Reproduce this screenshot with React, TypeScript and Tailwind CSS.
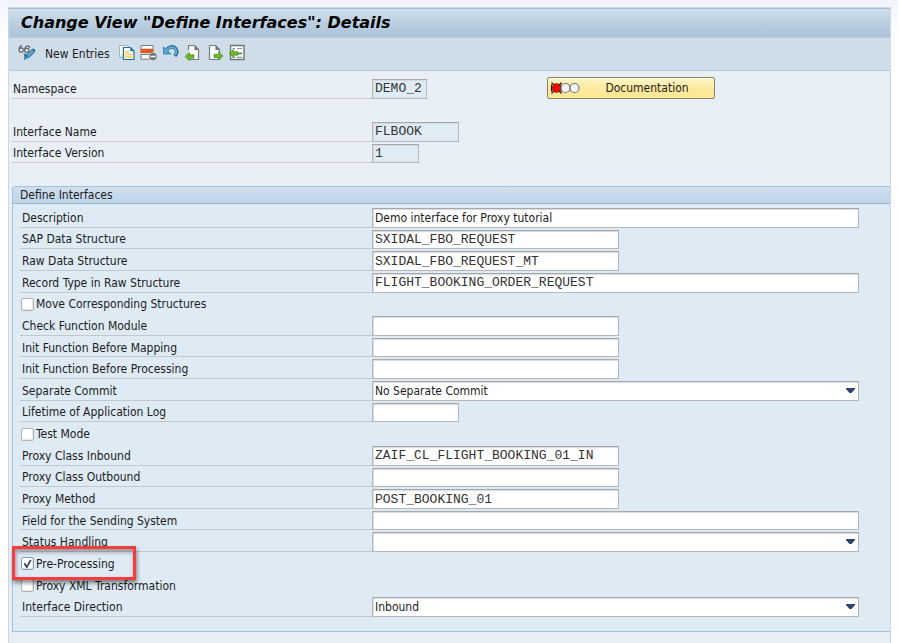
import type { ReactNode } from "react";

type Row = {
  id: string;
  label: string;
  kind: "text" | "mono" | "select" | "check";
  size?: "sm" | "md" | "full";
  value?: string;
  checked?: boolean;
  marked?: boolean;
};

const rows: Row[] = [
  { id: "description", label: "Description", kind: "text", size: "full", value: "Demo interface for Proxy tutorial" },
  { id: "sap-structure", label: "SAP Data Structure", kind: "mono", size: "md", value: "SXIDAL_FBO_REQUEST" },
  { id: "raw-structure", label: "Raw Data Structure", kind: "mono", size: "md", value: "SXIDAL_FBO_REQUEST_MT" },
  { id: "record-type", label: "Record Type in Raw Structure", kind: "mono", size: "full", value: "FLIGHT_BOOKING_ORDER_REQUEST" },
  { id: "move-corresponding", label: "Move Corresponding Structures", kind: "check" },
  { id: "check-function", label: "Check Function Module", kind: "mono", size: "md" },
  { id: "init-mapping", label: "Init Function Before Mapping", kind: "mono", size: "md" },
  { id: "init-processing", label: "Init Function Before Processing", kind: "mono", size: "md" },
  { id: "separate-commit", label: "Separate Commit", kind: "select", value: "No Separate Commit" },
  { id: "log-lifetime", label: "Lifetime of Application Log", kind: "mono", size: "sm" },
  { id: "test-mode", label: "Test Mode", kind: "check" },
  { id: "proxy-inbound", label: "Proxy Class Inbound", kind: "mono", size: "md", value: "ZAIF_CL_FLIGHT_BOOKING_01_IN" },
  { id: "proxy-outbound", label: "Proxy Class Outbound", kind: "mono", size: "md" },
  { id: "proxy-method", label: "Proxy Method", kind: "mono", size: "md", value: "POST_BOOKING_01" },
  { id: "sending-system", label: "Field for the Sending System", kind: "mono", size: "full" },
  { id: "status-handling", label: "Status Handling", kind: "select", value: "" },
  { id: "pre-processing", label: "Pre-Processing", kind: "check", checked: true, marked: true },
  { id: "xml-transformation", label: "Proxy XML Transformation", kind: "check" },
  { id: "direction", label: "Interface Direction", kind: "select", value: "Inbound" },
];

const widths = { sm: "w-[87px]", md: "w-[247px]", full: "w-full" };

const fieldBox =
  "block h-full min-w-0 rounded-none border border-[#b4b8bc] border-t-[#a4a8ac] px-0.5 text-[#1c1c1c] shadow-[inset_1px_1px_1px_#d8dadc] outline-none";
const monoText = "font-['Liberation_Mono','Courier_New',monospace] text-[13px] text-[#333]";

function LabelledRow({ id, label, children }: { id: string; label: string; children: ReactNode }) {
  return (
    <div className="flex min-h-0">
      <label htmlFor={id} className="flex w-[352px] shrink-0 items-center border-b border-[#c3c8cc] pt-[3px] pl-0.5">
        {label}
      </label>
      <div className="min-w-0 flex-1 pt-0.5">{children}</div>
    </div>
  );
}

function SelectBox({ id, value }: { id: string; value: string }) {
  return (
    <div className="relative h-full">
      <select id={id} defaultValue={value} className={`${fieldBox} w-full appearance-none bg-white`}>
        <option value={value}>{value}</option>
      </select>
      <svg className="pointer-events-none absolute top-1/2 right-1 -mt-[3px]" width="9" height="5" viewBox="0 0 9 5">
        <path d="M0 0h9v1L5.5 5h-2L0 1z" fill="#2b4272" />
      </svg>
    </div>
  );
}

function CheckRow({ row }: { row: Row }) {
  return (
    <div className="relative flex items-center pt-0.5 pl-px">
      <div className="relative h-[13px] w-[13px]">
        <input
          id={row.id}
          type="checkbox"
          defaultChecked={row.checked}
          className="peer block h-[13px] w-[13px] appearance-none rounded-[2px] border border-[#b3b3b3] bg-white shadow-[inset_-1px_-1px_1px_#e6e6e6] checked:border-[#7f9fc4]"
        />
        <svg className="pointer-events-none absolute inset-0 hidden peer-checked:block" width="13" height="13" viewBox="0 0 13 13">
          <path d="M3.3 6.3l2.4 3.9L9.8 3" fill="none" stroke="#32405c" strokeWidth="1.7" />
        </svg>
      </div>
      <label htmlFor={row.id} className="pl-0.5">{row.label}</label>
      {row.marked && (
        <div className="pointer-events-none absolute -top-1.5 -left-2 z-10 h-[34px] w-[124px] border-3 border-[#f73c3c] shadow-[1px_3px_4px_rgba(0,0,0,0.45),inset_1px_3px_4px_rgba(0,0,0,0.35)]" />
      )}
    </div>
  );
}

function FormRow({ row }: { row: Row }) {
  if (row.kind === "check") return <CheckRow row={row} />;
  return (
    <LabelledRow id={row.id} label={row.label}>
      {row.kind === "select" ? (
        <SelectBox id={row.id} value={row.value ?? ""} />
      ) : (
        <input
          id={row.id}
          type="text"
          defaultValue={row.value}
          className={`${fieldBox} bg-white ${widths[row.size ?? "md"]} ${row.kind === "mono" ? monoText : ""}`}
        />
      )}
    </LabelledRow>
  );
}

function KeyField({ id, label, value, width }: { id: string; label: string; value: string; width: string }) {
  return (
    <div className="flex min-h-0">
      <label htmlFor={id} className="flex w-[360px] shrink-0 items-center border-b border-[#c9cdd0] pt-[3px] pl-px">
        {label}
      </label>
      <div className="pt-0.5">
        <input id={id} type="text" readOnly defaultValue={value} className={`${fieldBox} ${monoText} ${width} bg-[#dfebf5]`} />
      </div>
    </div>
  );
}

const GreenLeft = ({ x, y }: { x: number; y: number }) => (
  <path transform={`translate(${x} ${y})`} d="M0 4L4.5 0v2.3H9v3.4H4.5V8z" fill="#6fb52c" stroke="#4c8f22" strokeWidth=".7" />
);

function ToolButton({ name, children }: { name: string; children: ReactNode }) {
  return (
    <button type="button" aria-label={name} className="block h-[18px] w-[18px]">
      <svg width="18" height="18" viewBox="0 0 18 18">{children}</svg>
    </button>
  );
}

function Toolbar() {
  return (
    <div className="flex h-[33px] items-center border-b border-[#b9c9da] bg-[#cfdde8] pb-0.5 pl-[9px]">
      <ToolButton name="Display / Change">
        <g fill="#eef3f6" stroke="#555a5e" strokeWidth="1.1">
          <circle cx="3.2" cy="6" r="2.1" />
          <circle cx="8.8" cy="6.3" r="2.1" />
          <path d="M1.1 5.300C1.300 3 2.300 1.500 4 1.700M6.700 5.300C7.200 3 8.400 1.800 10.200 2.100q1.800.4 1.400 2" fill="none" />
        </g>
        <path d="M8.500 14l.7-3.500 5-5.300 2.500 2.500-5 5.300z" fill="#5fa2cd" stroke="#26719f" strokeWidth="1" />
        <path d="M14.200 5.200l1-1 2.400 2.400-1 1z" fill="#1c6a9b" />
        <path d="M5.500 9l3.700 1.500-1.200 4.500-2.500 1.500 1-3z" fill="#2c78a8" />
      </ToolButton>
      <button type="button" className="mr-2 ml-[9px] pt-px">New Entries</button>
      <div className="flex gap-1">
        <ToolButton name="Copy As">
          <path d="M1.5 13V1.500h8.700V4z" fill="#fff" />
          <path d="M5 13.500H1.500V1.500h8.700V3" fill="none" stroke="#a3b4c2" />
          <path d="M3 5h1.500M3 7.500h1.500M3 10h1.500" stroke="#e8d48a" />
          <path d="M5.500 3.500h7l3.500 3.600v8.400H5.500z" fill="#fff" stroke="#1f7099" strokeWidth="1.200" />
          <path d="M12.300 3.500v3.700H16z" fill="#1f7099" />
          <path d="M7 8h4M7 10.500h7.500M7 13h7.500" stroke="#f6d873" strokeWidth="1.800" />
        </ToolButton>
        <ToolButton name="Delete">
          <path d="M1 1.500h12v3.700H1zM1 10.500h10v4.700H1z" fill="#fff" stroke="#747b80" />
          <path d="M.5 5h13v4H.5z" fill="#e4561c" />
          <circle cx="13" cy="12.500" r="4" fill="#646a6e" stroke="#e4ebf0" strokeWidth=".6" />
          <path d="M10.500 12.500h5" stroke="#fff" strokeWidth="1.700" />
        </ToolButton>
        <ToolButton name="Undo">
          <path d="M4 6.500C6 3.500 9.500 2.300 12.200 3.500s3.800 5 .6 8.500" fill="none" stroke="#24739f" strokeWidth="3.800" />
          <path d="M1.500 3v7h7.500z" fill="#5fa6ce" stroke="#3f88b3" />
          <path d="M4 6.800C6 3.900 9.300 2.700 11.900 3.800s3.300 4.200 1.300 7" fill="none" stroke="#6fb2d8" strokeWidth="1.600" />
        </ToolButton>
        <ToolButton name="Previous Entry">
          <path d="M4.500 1.500h6l4 4v10h-10z" fill="#fff" stroke="#777e83" strokeWidth="1.200" />
          <path d="M10.500 1v5h4.500z" fill="#6d7479" />
          <path d="M3.500 6v9" stroke="#cfdde8" strokeWidth="3" />
          <GreenLeft x={1} y={8.5} />
        </ToolButton>
        <ToolButton name="Next Entry">
          <path d="M3.500 1.500h6l4 4v10h-10z" fill="#fff" stroke="#777e83" strokeWidth="1.200" />
          <path d="M9.500 1v5H14z" fill="#6d7479" />
          <path d="M17 12l-4.500-4v2.300H8v3.400h4.500V16z" fill="#6fb52c" stroke="#4c8f22" strokeWidth=".7" />
        </ToolButton>
        <ToolButton name="Other Entry">
          <path d="M2.500 1.500H16v14H2.500z" fill="#fff" stroke="#6d7479" strokeWidth="1.400" />
          <path d="M4.500 4.500H7M9 4.500h5M4.500 13.300H7M9 13.300h5" stroke="#8b9499" strokeWidth="1.200" />
          <path d="M9.500 9.500H14" stroke="#3f8c4c" strokeWidth="1.800" />
          <GreenLeft x={1} y={5.5} />
        </ToolButton>
      </div>
    </div>
  );
}

export default function App() {
  return (
    <div className="flex min-h-screen flex-col bg-linear-to-b from-[#f1f5fb] to-white to-[40px] pt-[7px] pr-[7px] pl-2 font-['DejaVu_Sans_Condensed','DejaVu_Sans',sans-serif] text-[12px] leading-4 text-[#1c1c1c]">
      <main className="flex-1 border-x border-t border-[#ccd8e6] bg-[#e8eff6]">
        <h1 className="flex h-[30px] items-center border-t border-b border-t-[#a9bac9] border-b-[#b8cadb] bg-linear-to-b from-[#d0e0ec] via-[#bccfe0] to-[#a9c2da] pb-px pl-3 font-['DejaVu_Sans',sans-serif] text-[16px] leading-6 font-bold text-black italic">
          Change View "Define Interfaces": Details
        </h1>
        <Toolbar />

        <form>
          <div className="flex pt-1.5 pl-[3px]">
            <div className="grid h-[86px] w-[535px] shrink-0 auto-rows-fr">
              <KeyField id="namespace" label="Namespace" value="DEMO_2" width="w-[55px]" />
              <div />
              <KeyField id="interface-name" label="Interface Name" value="FLBOOK" width="w-[87px]" />
              <KeyField id="interface-version" label="Interface Version" value="1" width="w-[47px]" />
            </div>
            <button
              type="button"
              className="flex h-[22px] w-[168px] items-center rounded-[2px] border border-[#8b8365] bg-linear-to-b from-[#fff5c8] via-[#fdeaa0] to-[#fde692] shadow-[inset_0_1px_0_#fffbe6]"
            >
              <svg className="ml-0.5 shrink-0" width="30" height="14" viewBox="0 0 30 14">
                <path d="M1.500 1.500l10 11M11.500 1.500l-10 11M1.500 3.500v7M11 3.500v7" stroke="#222" strokeWidth="1.200" />
                <circle cx="6.500" cy="7" r="4.300" fill="#fb0707" stroke="#611" strokeWidth=".8" />
                <circle cx="15.500" cy="7" r="4.500" fill="#f3f3f3" stroke="#777" strokeWidth="1.200" />
                <circle cx="24.500" cy="7" r="4.500" fill="#f3f3f3" stroke="#777" strokeWidth="1.200" />
              </svg>
              <span className="flex-1 text-center">Documentation</span>
            </button>
          </div>

          <fieldset className="mt-[23px] ml-[3px] min-w-0 rounded-tl-[3px] border border-r-0 border-[#a5c0da] bg-[#deeaf4]">
            <h2 className="flex h-[17px] items-center border-b border-[#9ab4d0] bg-linear-to-b from-[#cfdfed] to-[#bfd5ea] pl-[7px]">
              Define Interfaces
            </h2>
            <div className="grid h-[413px] auto-rows-fr pt-0.5 pr-[31px] pl-[7px]">
              {rows.map((row) => (
                <FormRow key={row.id} row={row} />
              ))}
            </div>
            <div className="h-3.5" />
          </fieldset>
        </form>
      </main>
    </div>
  );
}
